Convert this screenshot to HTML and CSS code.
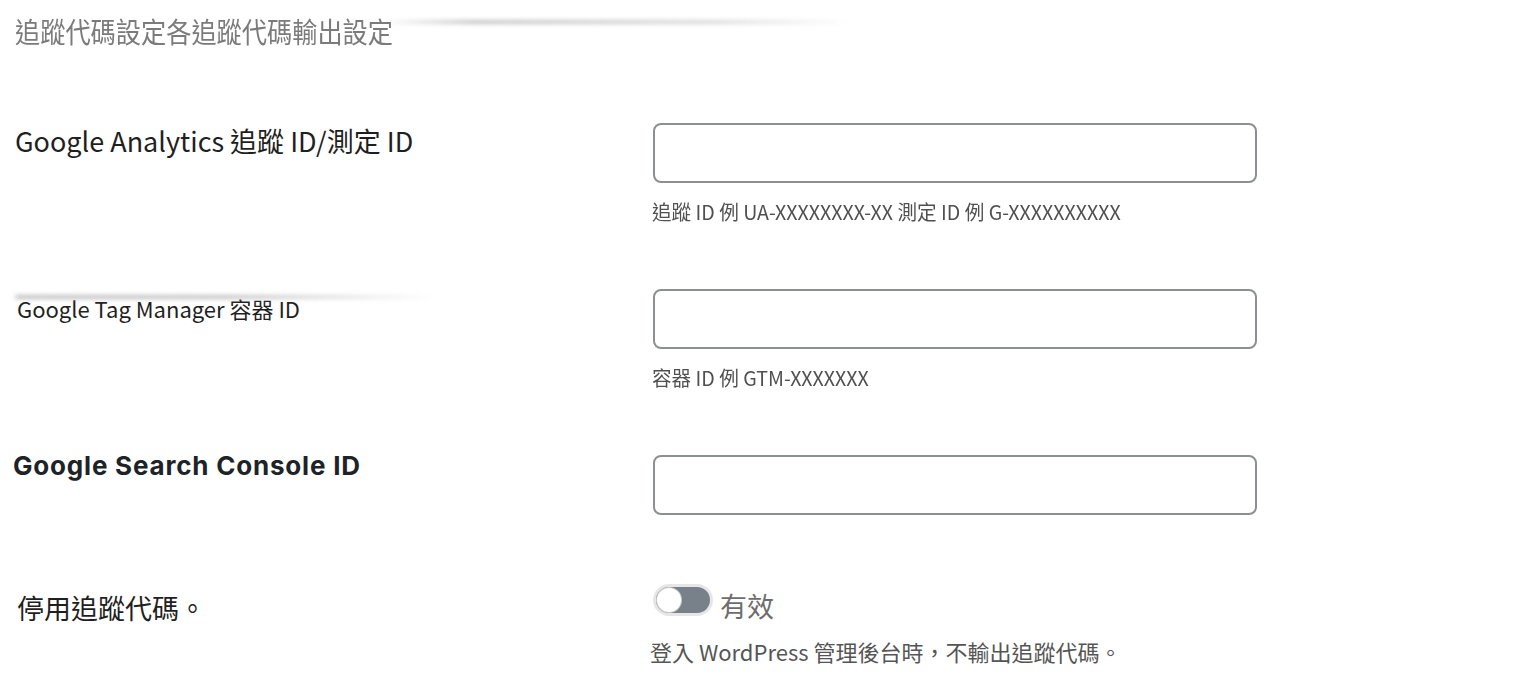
FILE: index.html
```html
<!DOCTYPE html>
<html lang="zh-Hant">
<head>
<meta charset="utf-8">
<title>追蹤代碼設定</title>
<link rel="stylesheet" href="styles.css">
</head>
<body>
<div class="page">
  <div class="smear smear-top"></div>
  <div class="smear smear-mid"></div>
  <h2 class="section-title"><span class="squeeze">追蹤代碼設定各追蹤代碼輸出設定</span></h2>
  <div class="rows">
    <div class="row row-ga">
      <label class="label label-ga">Google Analytics 追蹤 ID/測定 ID</label>
      <div class="field">
        <input class="text-input" type="text">
        <p class="help"><span class="squeeze-light">追蹤 ID 例 UA-XXXXXXXX-XX 測定 ID 例 G-XXXXXXXXXX</span></p>
      </div>
    </div>
    <div class="row row-gtm">
      <label class="label label-gtm">Google Tag Manager 容器 ID</label>
      <div class="field">
        <input class="text-input" type="text">
        <p class="help"><span class="squeeze-light">容器 ID 例 GTM-XXXXXXX</span></p>
      </div>
    </div>
    <div class="row row-gsc">
      <label class="label label-gsc">Google Search Console ID</label>
      <div class="field">
        <input class="text-input" type="text">
      </div>
    </div>
    <div class="row row-off">
      <label class="label label-off">停用追蹤代碼。</label>
      <div class="field">
        <div class="toggle-line">
          <span class="toggle"><span class="knob"></span></span>
          <span class="toggle-text">有效</span>
        </div>
        <p class="note">登入 WordPress 管理後台時，不輸出追蹤代碼。</p>
      </div>
    </div>
  </div>
</div>
</body>
</html>
```
FILE: styles.css
```css
html, body {
  margin: 0;
  padding: 0;
  background: #ffffff;
}
body {
  font-family: "Noto Sans CJK TC", "Noto Sans", sans-serif;
  color: #1d2327;
}
.page {
  position: relative;
  padding-left: 15px;
  width: 1525px;
  height: 691px;
  overflow: hidden;
}
.smear {
  position: absolute;
  height: 4px;
  border-radius: 2px;
  filter: blur(2px);
}
.smear-top {
  left: 380px;
  top: 20px;
  width: 470px;
  background: linear-gradient(90deg, rgba(170,170,170,0) 0%, rgba(170,170,170,0.7) 20%, rgba(190,190,190,0.6) 70%, rgba(200,200,200,0) 100%);
}
.smear-mid {
  left: 15px;
  top: 295px;
  width: 420px;
  background: linear-gradient(90deg, rgba(150,150,150,0.6) 0%, rgba(170,170,170,0.7) 50%, rgba(200,200,200,0) 100%);
}
.squeeze {
  display: inline-block;
  transform: scaleX(0.9);
  transform-origin: left center;
  white-space: nowrap;
}
.squeeze-light {
  display: inline-block;
  transform: scaleX(0.98);
  transform-origin: left center;
  white-space: nowrap;
}
.section-title {
  margin: 0;
  padding-top: 13px;
  font-size: 28px;
  line-height: 36px;
  font-weight: 400;
  color: #7b7b7b;
  height: 36px;
}
.rows {
  display: flex;
  flex-direction: column;
  margin-top: 74px;
}
.row {
  display: grid;
  grid-template-columns: 638px 604px;
  align-items: start;
}
.row + .row {
  margin-top: 65px;
}
.row-off {
  margin-top: 68px !important;
}
.label {
  display: block;
  white-space: nowrap;
}
.label-ga {
  font-size: 27px;
  line-height: 36px;
  padding-top: 0;
  color: #1f1f1f;
}
.label-gtm {
  font-size: 22px;
  line-height: 30px;
  padding-top: 4px;
  color: #1f1f1f;
  margin-left: 2px;
}
.label-gsc {
  font-family: Inter, Roboto, "Noto Sans", sans-serif;
  font-weight: 700;
  font-size: 26px;
  letter-spacing: 0.8px;
  line-height: 36px;
  margin-top: -7px;
  margin-left: -2px;
  color: #1d2327;
}
.label-off {
  font-size: 27px;
  line-height: 36px;
  padding-top: 7px;
  margin-left: 2px;
  color: #1f1f1f;
}
.field {
  display: flex;
  flex-direction: column;
}
.text-input {
  box-sizing: border-box;
  width: 604px;
  height: 60px;
  margin: 0;
  border: 2px solid #8c8f94;
  border-radius: 8px;
  background: #ffffff;
  font-size: 18px;
  padding: 0 12px;
}
.help {
  margin: 17px 0 0 -1px;
  font-size: 20px;
  line-height: 24px;
  color: #505050;
  height: 24px;
}
.toggle-line {
  display: flex;
  align-items: center;
  gap: 7px;
  height: 34px;
}
.toggle {
  box-sizing: border-box;
  width: 60px;
  height: 32px;
  border-radius: 16px;
  border: 3px solid #e6e6e6;
  background: #78808a;
  display: flex;
  align-items: center;
  padding-left: 1px;
}
.knob {
  width: 24px;
  height: 24px;
  border-radius: 50%;
  background: #ffffff;
  box-shadow: 0 0 0 1px #c9c9c9;
}
.toggle-text {
  font-size: 27px;
  line-height: 36px;
  color: #6d6d6d;
  margin-top: 12px;
}
.note {
  margin: 19px 0 0 -3px;
  font-size: 22px;
  line-height: 30px;
  color: #555555;
}
```
